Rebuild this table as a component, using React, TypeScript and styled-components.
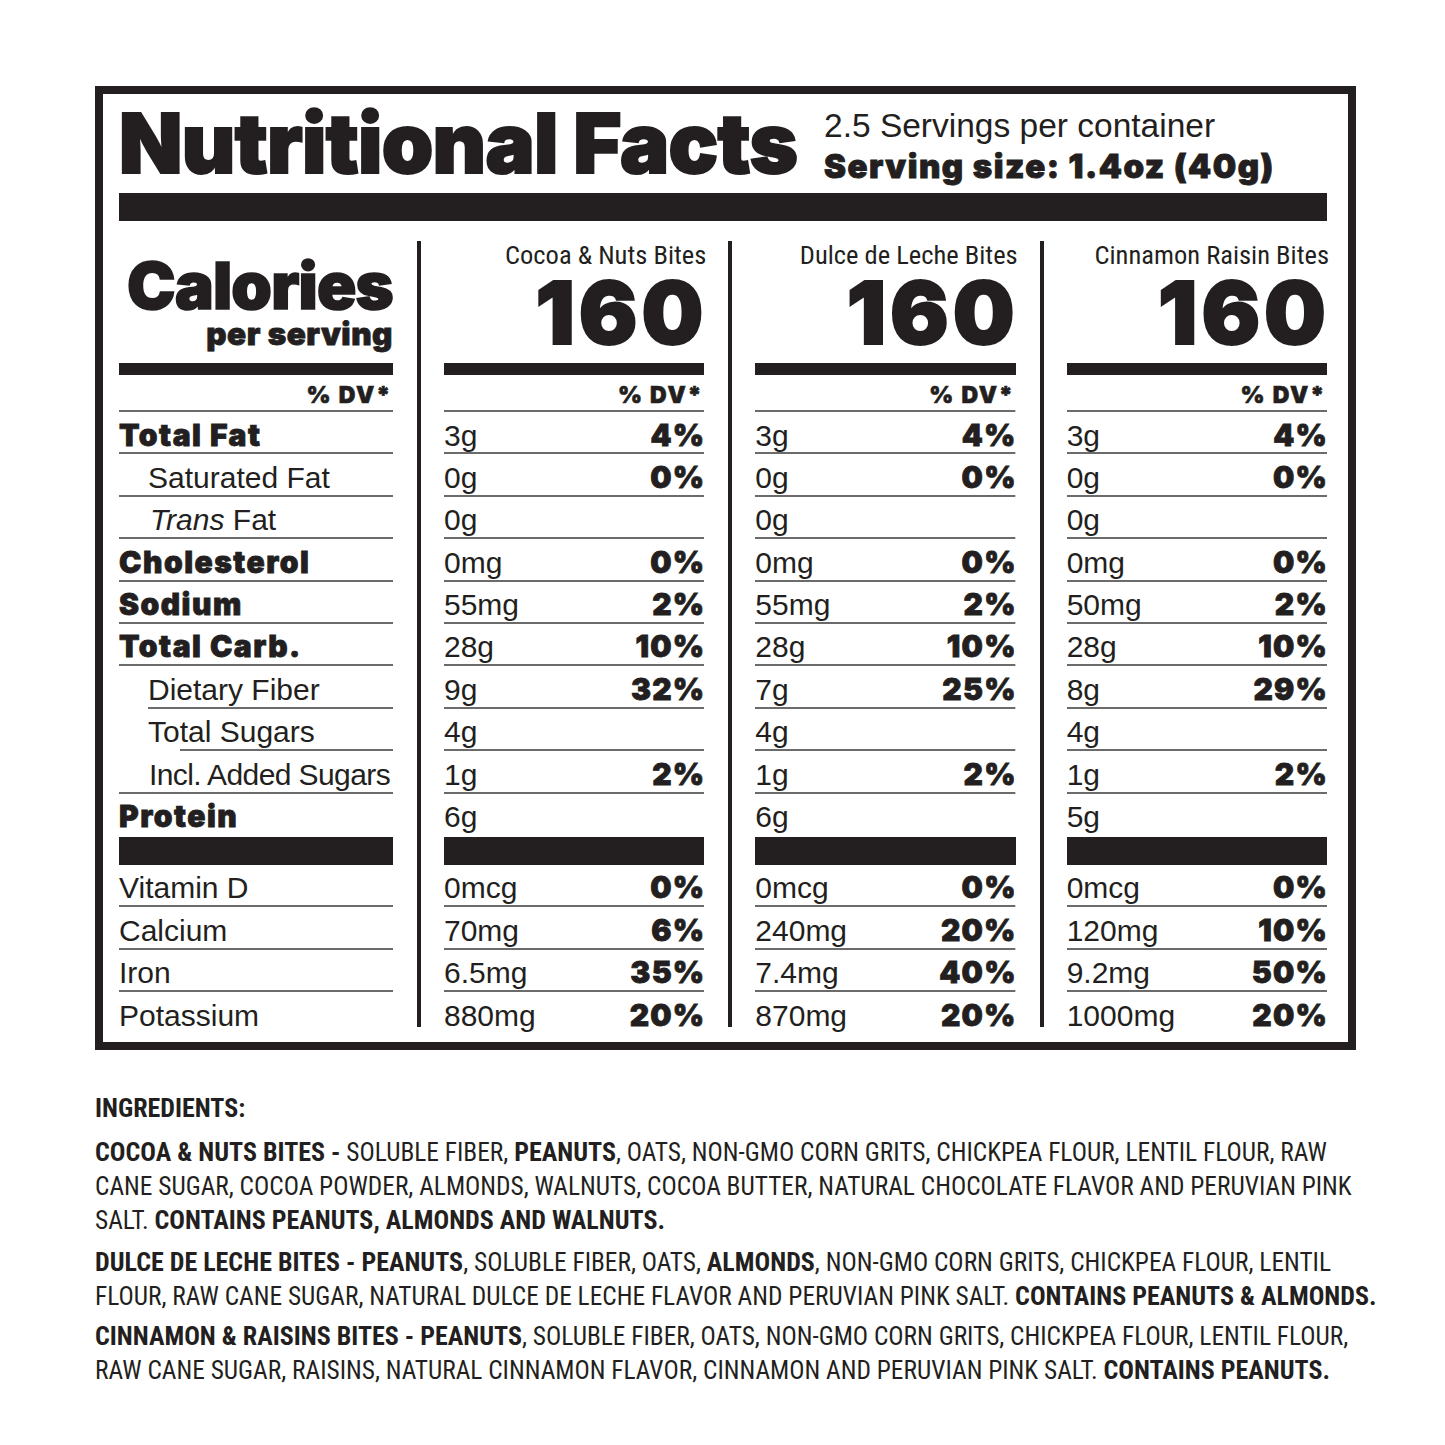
import React from "react";
import styled, { createGlobalStyle, css } from "styled-components";

const INK = "#231f20";
const RULE = "#6b6b6b";
const HEAVY = `"Inter", "Roboto", "Liberation Sans", sans-serif`;
const REG = `"Liberation Sans", Arial, sans-serif`;
const NARROW = `"Liberation Sans Narrow", "Roboto Condensed", "Liberation Sans", sans-serif`;

const GlobalStyle = createGlobalStyle`
  html, body { margin: 0; padding: 0; background: #fff; }
  body { font-family: ${REG}; color: ${INK}; }
  * { box-sizing: border-box; }
`;

const heavy = (size: number, lh: number, stroke: number, ls = 0) => css`
  font-family: ${HEAVY};
  font-weight: 900;
  font-size: ${size}px;
  line-height: ${lh}px;
  letter-spacing: ${ls}px;
  -webkit-text-stroke: ${stroke}px ${INK};
`;

const Page = styled.div`
  width: 1445px;
  min-height: 1445px;
  padding: 86px 0 0 95px;
`;

const Panel = styled.section`
  width: 1261px;
  border: 8px solid ${INK};
  padding: 0 21px 15px 16px;
  display: flex;
  flex-direction: column;
`;

const Header = styled.header`
  height: 99px;
  display: grid;
  grid-template-columns: 705px 1fr;
`;

const Title = styled.h1`
  margin: 19px 0 0 0;
  ${heavy(82.5, 60, 2, -0.7)}
  white-space: nowrap;
`;

const ServingInfo = styled.div`
  padding-top: 20px;
  display: flex;
  flex-direction: column;
  white-space: nowrap;
`;

const ServingsLine = styled.div`
  font-family: ${REG};
  font-size: 33.5px;
  line-height: 24px;
`;

const ServingSize = styled.div`
  margin-top: 17px;
  ${heavy(33, 23, 0.9, 1.5)}
`;

const Bar = styled.div<{ $h: number }>`
  height: ${(p) => p.$h}px;
  background: ${INK};
  flex: none;
`;

const Table = styled.div`
  margin-top: 20px;
  display: flex;
`;

const LabelColumn = styled.div`
  width: 274px;
  flex: none;
  display: flex;
  flex-direction: column;
`;

const ValueColumn = styled.div`
  flex: 1;
  margin-left: 24px;
  border-left: 4px solid ${INK};
  padding-left: 23px;
  display: flex;
  flex-direction: column;
`;

const ColumnHead = styled.div<{ $top: number }>`
  height: 122px;
  padding-top: ${(p) => p.$top}px;
  text-align: right;
  white-space: nowrap;
`;

const CaloriesWord = styled.div`
  ${heavy(65, 48, 1.6, -0.8)}
`;

const PerServing = styled.div`
  margin-top: 13px;
  ${heavy(31.5, 22, 0.8, 0.5)}
`;

const ProductName = styled.div`
  margin-right: -2px;
  font-family: ${NARROW};
  font-size: 26.5px;
  line-height: 19px;
`;

const BigNumber = styled.div`
  margin-top: 17px;
  margin-right: -3px;
  ${heavy(87, 63, 2, 4)}
`;

const ruled = css<{ $inset?: number }>`
  background: linear-gradient(${RULE}, ${RULE}) no-repeat right bottom /
    calc(100% - ${(p) => p.$inset ?? 0}px) 2px;
`;

const DvRow = styled.div<{ $inset?: number }>`
  height: 37px;
  padding-top: 12px;
  padding-right: 1px;
  text-align: right;
  ${heavy(23, 16, 0.6, 1.8)}
  ${ruled}
`;

const Row = styled.div<{ $h?: number; $rule?: boolean; $inset?: number }>`
  height: ${(p) => p.$h ?? 42.4}px;
  padding-top: 12.5px;
  display: flex;
  justify-content: space-between;
  align-items: flex-start;
  white-space: nowrap;
  ${(p) => (p.$rule ? ruled : "")}
`;

const regularText = css`
  font-family: ${REG};
  font-weight: 400;
  font-size: 30px;
  line-height: 21.5px;
  -webkit-text-stroke: 0;
`;

const Label = styled.span<{ $bold?: boolean; $indent?: number; $tight?: boolean }>`
  display: block;
  padding-left: ${(p) => p.$indent ?? 0}px;
  ${(p) => (p.$bold ? heavy(30, 21.5, 0.8, 1.5) : regularText)}
  ${(p) => (p.$tight ? "letter-spacing: -0.6px;" : "")}
`;

const Em = styled.em`
  font-style: italic;
`;

const Amount = styled.span`
  display: block;
  ${regularText}
`;

const Percent = styled.span`
  display: block;
  margin-right: -1px;
  ${heavy(30, 21.5, 0.8, 1.2)}
`;

const Ingredients = styled.section`
  margin-top: 41px;
  font-family: ${NARROW};
  color: ${INK};
  white-space: nowrap;
`;

const IngHeading = styled.h2`
  margin: 0;
  font-family: ${NARROW};
  font-weight: 700;
  font-size: 26px;
  line-height: 34px;
`;

const IngPara = styled.p<{ $gap: number }>`
  margin: ${(p) => p.$gap}px 0 0;
  font-size: 25.4px;
  line-height: 34px;
`;

const IngLine = styled.span`
  display: block;
`;

const B = styled.b`
  font-weight: 700;
  font-size: 26px;
`;

type Cell = [string, string?];

interface Product {
  name: string;
  top: Cell[];
  bottom: Cell[];
}

const products: Product[] = [
  {
    name: "Cocoa & Nuts Bites",
    top: [["3g", "4%"], ["0g", "0%"], ["0g"], ["0mg", "0%"], ["55mg", "2%"], ["28g", "10%"], ["9g", "32%"], ["4g"], ["1g", "2%"], ["6g"]],
    bottom: [["0mcg", "0%"], ["70mg", "6%"], ["6.5mg", "35%"], ["880mg", "20%"]],
  },
  {
    name: "Dulce de Leche Bites",
    top: [["3g", "4%"], ["0g", "0%"], ["0g"], ["0mg", "0%"], ["55mg", "2%"], ["28g", "10%"], ["7g", "25%"], ["4g"], ["1g", "2%"], ["6g"]],
    bottom: [["0mcg", "0%"], ["240mg", "20%"], ["7.4mg", "40%"], ["870mg", "20%"]],
  },
  {
    name: "Cinnamon Raisin Bites",
    top: [["3g", "4%"], ["0g", "0%"], ["0g"], ["0mg", "0%"], ["50mg", "2%"], ["28g", "10%"], ["8g", "29%"], ["4g"], ["1g", "2%"], ["5g"]],
    bottom: [["0mcg", "0%"], ["120mg", "10%"], ["9.2mg", "50%"], ["1000mg", "20%"]],
  },
];

interface NutrientLabel {
  text: React.ReactNode;
  bold?: boolean;
  indent?: number;
  inset?: number;
  tight?: boolean;
}

const topLabels: NutrientLabel[] = [
  { text: "Total Fat", bold: true },
  { text: "Saturated Fat", indent: 29 },
  { text: <><Em>Trans</Em> Fat</>, indent: 31 },
  { text: "Cholesterol", bold: true },
  { text: "Sodium", bold: true },
  { text: "Total Carb.", bold: true },
  { text: "Dietary Fiber", indent: 29, inset: 29 },
  { text: "Total Sugars", indent: 29, inset: 61 },
  { text: "Incl. Added Sugars", indent: 30, tight: true },
  { text: "Protein", bold: true },
];

const bottomLabels = ["Vitamin D", "Calcium", "Iron", "Potassium"];

const rowHeight = (i: number, count: number, lastH: number) =>
  i === count - 1 ? lastH : 42.4;

export default function App() {
  return (
    <>
      <GlobalStyle />
      <Page>
        <Panel>
          <Header>
            <Title>Nutritional Facts</Title>
            <ServingInfo>
              <ServingsLine>2.5 Servings per container</ServingsLine>
              <ServingSize>Serving size: 1.4oz (40g)</ServingSize>
            </ServingInfo>
          </Header>
          <Bar $h={28} />
          <Table>
            <LabelColumn>
              <ColumnHead $top={21}>
                <CaloriesWord>Calories</CaloriesWord>
                <PerServing>per serving</PerServing>
              </ColumnHead>
              <Bar $h={12} />
              <DvRow>% DV*</DvRow>
              {topLabels.map((l, i) => (
                <Row
                  key={i}
                  $h={rowHeight(i, topLabels.length, 43.4)}
                  $rule={i < topLabels.length - 1}
                  $inset={l.inset}
                >
                  <Label $bold={l.bold} $indent={l.indent} $tight={l.tight}>
                    {l.text}
                  </Label>
                </Row>
              ))}
              <Bar $h={28} />
              {bottomLabels.map((l, i) => (
                <Row
                  key={l}
                  $h={rowHeight(i, bottomLabels.length, 34.8)}
                  $rule={i < bottomLabels.length - 1}
                >
                  <Label>{l}</Label>
                </Row>
              ))}
            </LabelColumn>
            {products.map((p) => (
              <ValueColumn key={p.name}>
                <ColumnHead $top={4}>
                  <ProductName>{p.name}</ProductName>
                  <BigNumber>160</BigNumber>
                </ColumnHead>
                <Bar $h={12} />
                <DvRow>% DV*</DvRow>
                {p.top.map(([amt, pct], i) => (
                  <Row
                    key={i}
                    $h={rowHeight(i, p.top.length, 43.4)}
                    $rule={i < p.top.length - 1}
                  >
                    <Amount>{amt}</Amount>
                    {pct && <Percent>{pct}</Percent>}
                  </Row>
                ))}
                <Bar $h={28} />
                {p.bottom.map(([amt, pct], i) => (
                  <Row
                    key={i}
                    $h={rowHeight(i, p.bottom.length, 34.8)}
                    $rule={i < p.bottom.length - 1}
                  >
                    <Amount>{amt}</Amount>
                    {pct && <Percent>{pct}</Percent>}
                  </Row>
                ))}
              </ValueColumn>
            ))}
          </Table>
        </Panel>

        <Ingredients>
          <IngHeading>INGREDIENTS:</IngHeading>
          <IngPara $gap={10}>
            <IngLine>
              <B>COCOA &amp; NUTS BITES -</B> SOLUBLE FIBER, <B>PEANUTS</B>, OATS, NON-GMO CORN GRITS, CHICKPEA FLOUR, LENTIL FLOUR, RAW
            </IngLine>
            <IngLine>
              CANE SUGAR, COCOA POWDER, ALMONDS, WALNUTS, COCOA BUTTER, NATURAL CHOCOLATE FLAVOR AND PERUVIAN PINK
            </IngLine>
            <IngLine>
              SALT. <B>CONTAINS PEANUTS, ALMONDS AND WALNUTS.</B>
            </IngLine>
          </IngPara>
          <IngPara $gap={8}>
            <IngLine>
              <B>DULCE DE LECHE BITES - PEANUTS</B>, SOLUBLE FIBER, OATS, <B>ALMONDS</B>, NON-GMO CORN GRITS, CHICKPEA FLOUR, LENTIL
            </IngLine>
            <IngLine>
              FLOUR, RAW CANE SUGAR, NATURAL DULCE DE LECHE FLAVOR AND PERUVIAN PINK SALT. <B>CONTAINS PEANUTS &amp; ALMONDS.</B>
            </IngLine>
          </IngPara>
          <IngPara $gap={6}>
            <IngLine>
              <B>CINNAMON &amp; RAISINS BITES - PEANUTS</B>, SOLUBLE FIBER, OATS, NON-GMO CORN GRITS, CHICKPEA FLOUR, LENTIL FLOUR,
            </IngLine>
            <IngLine>
              RAW CANE SUGAR, RAISINS, NATURAL CINNAMON FLAVOR, CINNAMON AND PERUVIAN PINK SALT. <B>CONTAINS PEANUTS.</B>
            </IngLine>
          </IngPara>
        </Ingredients>
      </Page>
    </>
  );
}
